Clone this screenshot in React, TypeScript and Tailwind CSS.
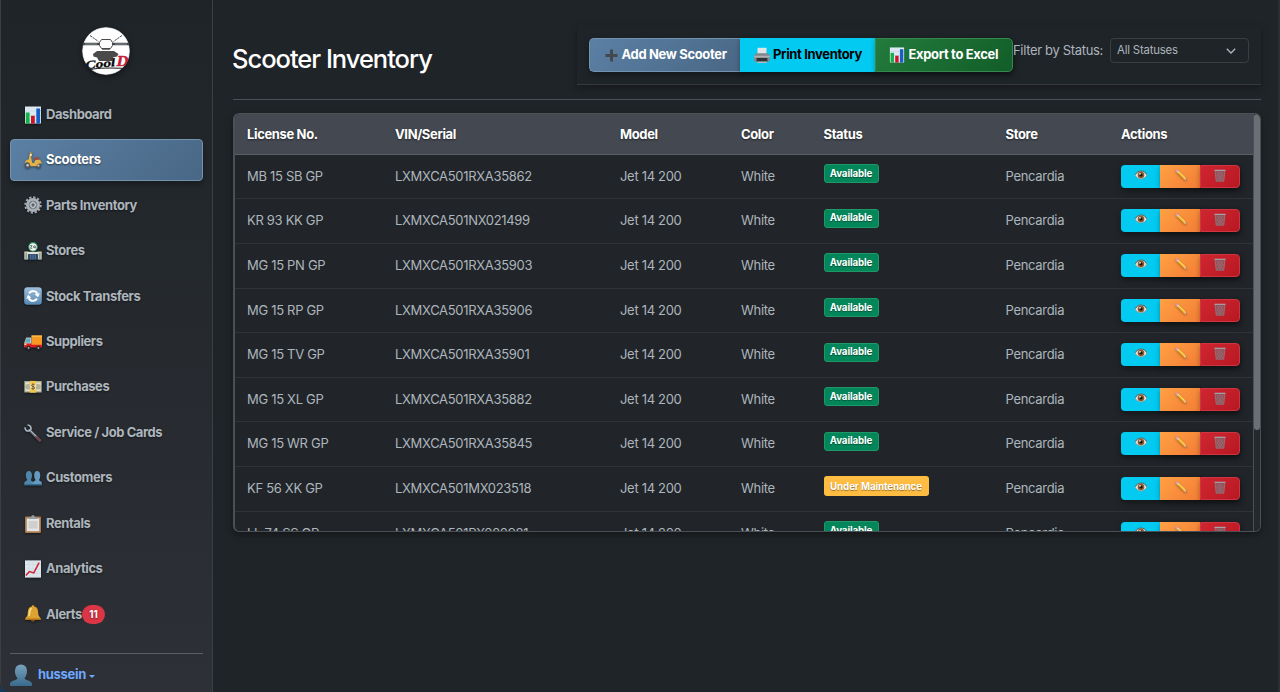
import type { ReactNode } from "react";

type IconProps = { className?: string };

function ChartIcon({ className }: IconProps) {
  return (
    <svg viewBox="0 0 18 18" className={className}>
      <rect x="1" y="0.5" width="16" height="17" fill="#dde9f2" />
      <path d="M1 5h16M1 9.5h16M1 14h16" stroke="#bccbd7" strokeWidth="0.5" />
      <rect x="1.8" y="6.5" width="3.8" height="11" fill="#12b34a" />
      <rect x="7" y="9.8" width="3.8" height="7.7" fill="#cf1224" />
      <rect x="12.3" y="2.5" width="3.8" height="15" fill="#1560c4" />
    </svg>
  );
}

function ScooterIcon({ className }: IconProps) {
  return (
    <svg viewBox="0 0 18 18" className={className}>
      <circle cx="3.6" cy="14.2" r="2.8" fill="#55585c" />
      <circle cx="3.6" cy="14.2" r="1.3" fill="#c4c9ce" />
      <circle cx="14.4" cy="14.6" r="2.5" fill="#55585c" />
      <circle cx="14.4" cy="14.6" r="1.1" fill="#c4c9ce" />
      <path d="M5.900 2 7.800 2.500 7.100 6.500l1.200 5.400h2c.2-2.100 1-3.200 2.600-3.300h2.300c1.600.8 2.400 2.400 2.500 4.300-2.600-1.200-4.600-.2-5.400 2.400H6.600L5.500 12.600C4.200 11 2.600 11 .7 12.400c.2-2.200 1.800-3.600 3.900-3.800z" fill="#e5b045" />
      <path d="M9.700 7.100c1.600-.9 3.600-.9 5.600-.3v1.700H10z" fill="#a8482f" />
      <path d="M5.400 1 8.600 2.400" stroke="#a58a5a" strokeWidth="1" />
      <circle cx="6.900" cy="4" r="1" fill="#fff1b5" />
    </svg>
  );
}

function GearIcon({ className }: IconProps) {
  return (
    <svg viewBox="0 0 18 18" className={className}>
      <circle cx="9" cy="9" r="7.700" fill="none" stroke="#a4abb2" strokeWidth="2" strokeDasharray="2.220 1.810" />
      <circle cx="9" cy="9" r="5.500" fill="#646c74" stroke="#a9b0b7" strokeWidth="3" />
      <path d="M9 4v10M4 9h10" stroke="#a0a7ae" strokeWidth="1.200" />
      <circle cx="9" cy="9" r="2.300" fill="#596169" stroke="#c2c8ce" strokeWidth="1.300" />
    </svg>
  );
}

function StoreIcon({ className }: IconProps) {
  return (
    <svg viewBox="0 0 18 18" className={className}>
      <path d="M.3 9.500h4v8h-4zM13.700 9.500h4v8h-4z" fill="#c9cdbd" />
      <path d="M1.500 11h1.400v6.500H1.500zM15.100 11h1.400v6.500h-1.400z" fill="#8d9b94" />
      <path d="M3.500 9.800h11v2.400h-11z" fill="#dfe2d5" />
      <path d="M4.600 12.200h8.800v5.500H4.600z" fill="#27466b" />
      <path d="M6.800 12.200v5.500M9 12.200v5.500M11.200 12.200v5.500" stroke="#7ea3c4" strokeWidth=".6" />
      <circle cx="9" cy="4.900" r="4.300" fill="#f2f8f3" stroke="#238c55" strokeWidth="1.100" />
      <path d="M6.200 3.600h1.900L6.400 6.300h1.900M10.500 3.300 9.300 5.300h2.400M11.200 3.800v2.700" stroke="#4a555b" strokeWidth=".8" fill="none" />
    </svg>
  );
}

function RefreshIcon({ className }: IconProps) {
  return (
    <svg viewBox="0 0 18 18" className={className}>
      <defs>
        <linearGradient id="sync" x2="0" y2="1">
          <stop stopColor="#9fc0dc" />
          <stop offset="1" stopColor="#5487b2" />
        </linearGradient>
      </defs>
      <rect x=".2" y=".2" width="17.600" height="17.600" rx="3.200" fill="url(#sync)" />
      <path d="M5 6.400C7 3.300 11.500 3.300 13.400 6.800M13 11.600C11 14.700 6.500 14.700 4.600 11.200" stroke="#fff" strokeWidth="2" fill="none" />
      <path d="m15.900 6.200-2 4-3.200-3zM2.100 11.800l2-4 3.200 3z" fill="#fff" />
    </svg>
  );
}

function TruckIcon({ className }: IconProps) {
  return (
    <svg viewBox="0 0 18 18" className={className}>
      <path d="M7.500 2.500H18V13H7.500z" fill="#f79a23" />
      <path d="M7.500 2.500H18v1.300H7.500z" fill="#ffc155" />
      <path d="M2.200 4.500h5.300V14H.3V9.600z" fill="#b9c2c3" />
      <path d="M2.600 5.500H6v4H1.200z" fill="#60aebd" />
      <path d="M.3 10.500h7.200v1.200H18v2.800H.3z" fill="#d81f20" />
      <path d="M.4 10.600h2v1.300h-2z" fill="#f4dfa0" />
      <circle cx="4.600" cy="14.900" r="2.100" fill="#2a2c2f" />
      <circle cx="4.600" cy="14.900" r=".9" fill="#b5b7ba" />
      <circle cx="14.400" cy="14.900" r="2.100" fill="#2a2c2f" />
      <circle cx="14.400" cy="14.900" r=".9" fill="#b5b7ba" />
    </svg>
  );
}

function MoneyIcon({ className }: IconProps) {
  return (
    <svg viewBox="0 0 18 18" className={className}>
      <rect x=".3" y="3" width="17.400" height="11.500" fill="#a9aa94" />
      <rect x="1.200" y="4.200" width="15.600" height="9" fill="#e0dec8" />
      <circle cx="4" cy="8.700" r="2.800" fill="#b1b39c" />
      <circle cx="14" cy="8.700" r="2.800" fill="#b1b39c" />
      <rect x="5.800" y="2.900" width="6.400" height="11.800" fill="#f1c64c" />
      <circle cx="9" cy="8.700" r="3.100" fill="#f5e3a4" />
      <path d="M10.700 6.900c-1-1-3.300-.8-3.300.6 0 1.600 3.300.7 3.300 2.300 0 1.400-2.600 1.400-3.500.4M9 5.400v6.500" stroke="#684e20" strokeWidth=".9" fill="none" />
    </svg>
  );
}

function WrenchIcon({ className }: IconProps) {
  return (
    <svg viewBox="0 0 18 18" className={className}>
      <path d="M5.500 6 15.800 16.300" stroke="#77818b" strokeWidth="2.400" strokeLinecap="round" />
      <path d="M12.500 12.900 16 16.400" stroke="#69434a" strokeWidth="2.500" strokeLinecap="round" />
      <path d="M1.100 3.400c-.2 2.600 1.500 4.200 4.300 3.400l1.500-1.500C7.400 2.900 6 1 3.500 1" stroke="#aab7c3" strokeWidth="1.700" fill="none" />
      <path d="m6.500 6.500 6 6" stroke="#bac4cd" strokeWidth=".8" />
    </svg>
  );
}

function CustomersIcon({ className }: IconProps) {
  return (
    <svg viewBox="0 0 18 18" className={className}>
      <path d="M.3 16v-2.300c.5-1.600 2.500-1.700 3.100-2.700C1.400 9 .8 2 4.800 2s3.800 6.700 2 8.900c.7 1.300 2.200 1.100 2.700 2.800V16z" fill="#4f86a9" />
      <path d="M8.800 16v-2.300c.4-1.600 2.200-1.600 2.800-2.800-1.900-2-2.300-8.900 1.500-8.900 4 0 3.800 6.800 1.900 9 .6 1.100 2.300 1.100 2.800 2.700V16z" fill="#629ac0" />
      <path d="M.3 15h17.500v1.500H.3z" fill="#39698a" />
    </svg>
  );
}

function ClipboardIcon({ className }: IconProps) {
  return (
    <svg viewBox="0 0 18 18" className={className}>
      <rect x="1" y="1.500" width="16" height="16.400" rx=".8" fill="#a7794e" />
      <path d="M2.700 3.300h12.600v13H2.700z" fill="#e4e4e2" />
      <path d="M4.500 6h9v7.500h-9z" fill="#cecfcf" />
      <path d="M4.500 4V2.300h2.700C7.200.8 7.900.2 9 .2s1.800.6 1.800 2.100h2.700V4z" fill="#949da5" />
    </svg>
  );
}

function TrendIcon({ className }: IconProps) {
  return (
    <svg viewBox="0 0 18 18" className={className}>
      <rect x="1" y=".4" width="16" height="17.200" fill="#dce5ec" />
      <path d="M1 4.500h16M1 9h16M1 13.500h16M5 .4v17.200M9 .4v17.200M13 .4v17.200" stroke="#c9d5dd" strokeWidth=".5" />
      <path d="m1.800 15.600 3.600-4 4.400 1.300 5.300-10.300" stroke="#cf2036" strokeWidth="1.500" fill="none" />
    </svg>
  );
}

function BellIcon({ className }: IconProps) {
  return (
    <svg viewBox="0 0 18 18" className={className}>
      <circle cx="9" cy="1.700" r="1.400" fill="#dca52a" />
      <path d="M9 1.500c4.700 0 5.200 3.500 5.400 8.200.4 1.900 2.200 2.300 2.500 4.500H1.100C1.400 12 3.200 11.600 3.600 9.700 3.800 5 4.300 1.500 9 1.500z" fill="#dda332" />
      <path d="M7.500 3.200C5.500 4.700 5.700 8.300 5 11" stroke="#ffe489" strokeWidth="1.500" fill="none" />
      <path d="M1.100 13.400h15.800v1.500H1.100z" fill="#b9791b" />
      <path d="M7 14.900h4c0 2.300-4 2.300-4 0z" fill="#765018" />
    </svg>
  );
}

function UserIcon({ className }: IconProps) {
  return (
    <svg viewBox="0 0 22 22" className={className}>
      <defs>
        <linearGradient id="user" x2="0" y2="1">
          <stop stopColor="#7aa3bd" />
          <stop offset="1" stopColor="#39698c" />
        </linearGradient>
      </defs>
      <path d="M0 22v-2.500c.9-3.200 6.600-2.700 7.500-5.200C3.800 10.500 3.600.5 11 .5s7.200 10 3.500 13.800c.9 2.500 6.600 2 7.500 5.200V22z" fill="url(#user)" />
    </svg>
  );
}

function PlusIcon({ className }: IconProps) {
  return (
    <svg viewBox="0 0 13 13" className={className}>
      <path d="M6.500.5v12M.5 6.500h12" stroke="#42484e" strokeWidth="3" />
    </svg>
  );
}

function PrinterIcon({ className }: IconProps) {
  return (
    <svg viewBox="0 0 16 17" className={className}>
      <path d="M3.500.8h9v6h-9z" fill="#e2e4e6" />
      <path d="M2 6.200h12l1.800 2.600v5.600H.2V8.800z" fill="#85898d" />
      <path d="M.2 8.800h15.600v1.600H.2z" fill="#b0b3b6" />
      <path d="M2.600 11h10.800v3.600H2.600z" fill="#303335" />
      <path d="M3.100 14.600h9.800V16H3.100z" fill="#b9bcbe" />
    </svg>
  );
}

function EyeIcon({ className }: IconProps) {
  return (
    <svg viewBox="0 0 12 12" className={className}>
      <path d="M.2 6.300C2.400 1 9.400.8 11.800 6 9.600 10.900 2.700 11.100.2 6.300z" fill="#ece5dc" stroke="#9a8f84" strokeWidth=".6" />
      <path d="M.3 5.700C2.600.9 9.400.8 11.700 5.600" fill="none" stroke="#5b5047" strokeWidth=".8" />
      <circle cx="6" cy="6" r="3.300" fill="#8a5a33" />
      <circle cx="6" cy="6" r="1.600" fill="#17110d" />
      <circle cx="5" cy="4.900" r=".8" fill="#fff" />
    </svg>
  );
}

function PencilIcon({ className }: IconProps) {
  return (
    <svg viewBox="0 0 12 12" className={className}>
      <path d="M.4 1.500C.6.700 1.200.2 2 .4l1.500 1.400L1.900 3.400z" fill="#e995a8" />
      <path d="m1.600 3.100 1.600-1.600 1.200 1.200-1.600 1.600z" fill="#c9d4dc" />
      <path d="m2.700 4.100 1.600-1.600 6 5.800L8.600 10z" fill="#ffd94f" />
      <path d="m2.700 4.100.7-.7 5.900 5.900-.7.700z" fill="#d99a28" />
      <path d="m8.600 10 1.700-1.700 1.200 3.200z" fill="#e9c795" />
      <path d="m10.600 11 .5-.6.500 1.200z" fill="#333" />
    </svg>
  );
}

function TrashIcon({ className }: IconProps) {
  return (
    <svg viewBox="0 0 12 13" className={className}>
      <path d="M1.100 1.500h9.800l-1.100 10.700H2.200z" fill="#777077" fillOpacity=".65" stroke="#8c858c" strokeWidth=".7" />
      <path d="m3 3 5.900 8M6 3l3 4M2.500 6l4.500 5.500M9 3l-5.900 8M6 3 3 7M9.500 6 5 11.500" stroke="#a87980" strokeWidth=".45" />
      <path d="M.5 1.300h11" stroke="#a7a0a4" strokeWidth="1.200" />
    </svg>
  );
}

function Logo() {
  return (
    <svg viewBox="0 0 48 48" className="mr-[2px] size-12 overflow-hidden rounded-full shadow-[0_2px_5px_rgba(0,0,0,.45)]">
      <circle cx="24" cy="24" r="24" fill="#bfc3c6" />
      <circle cx="24" cy="24" r="23.200" fill="#fff" />
      <path d="m8 8.500 8.500 6M40 8.500l-8.500 6" stroke="#333" strokeWidth=".9" strokeDasharray="2.500 .7" />
      <path d="M1 17h17M30 17h17" stroke="#43474a" strokeWidth="2.500" />
      <path d="M3 17h12M33 17h12" stroke="#aeb3b6" strokeWidth=".7" />
      <path d="M19.500 12.500h9l2 3v3l-2 3h-9l-2-3v-3z" fill="#fff" stroke="#484c4f" strokeWidth="1" />
      <path d="M20 22.300h8" stroke="#555" strokeWidth="1" />
      <path d="M15 24h17l4.500 3-1.500 2.500-4 1-1 3.500H17l-2-3.500-3.500-1L11 27z" fill="#4a4a4b" />
      <text x="3.500" y="41" transform="rotate(-6 14 39)" fill="#080808" stroke="#080808" strokeWidth=".3" className="font-['Liberation_Serif',serif] text-[11.500px] font-bold italic" textLength="30" lengthAdjust="spacingAndGlyphs">Cool</text>
      <text x="34.500" y="38.500" fill="#c51b36" stroke="#c51b36" strokeWidth=".4" className="font-['Liberation_Serif',serif] text-[15px] font-bold italic" textLength="12" lengthAdjust="spacingAndGlyphs">D</text>
      <path d="M8 42.600c10-2 20-1.600 33-1.300" stroke="#111" fill="none" />
    </svg>
  );
}

const nav: { label: string; icon: (p: IconProps) => ReactNode; active?: boolean; count?: number }[] = [
  { label: "Dashboard", icon: ChartIcon },
  { label: "Scooters", icon: ScooterIcon, active: true },
  { label: "Parts Inventory", icon: GearIcon },
  { label: "Stores", icon: StoreIcon },
  { label: "Stock Transfers", icon: RefreshIcon },
  { label: "Suppliers", icon: TruckIcon },
  { label: "Purchases", icon: MoneyIcon },
  { label: "Service / Job Cards", icon: WrenchIcon },
  { label: "Customers", icon: CustomersIcon },
  { label: "Rentals", icon: ClipboardIcon },
  { label: "Analytics", icon: TrendIcon },
  { label: "Alerts", icon: BellIcon, count: 11 },
];

const scooters = [
  ["MB 15 SB GP", "LXMXCA501RXA35862", "Available"],
  ["KR 93 KK GP", "LXMXCA501NX021499", "Available"],
  ["MG 15 PN GP", "LXMXCA501RXA35903", "Available"],
  ["MG 15 RP GP", "LXMXCA501RXA35906", "Available"],
  ["MG 15 TV GP", "LXMXCA501RXA35901", "Available"],
  ["MG 15 XL GP", "LXMXCA501RXA35882", "Available"],
  ["MG 15 WR GP", "LXMXCA501RXA35845", "Available"],
  ["KF 56 XK GP", "LXMXCA501MX023518", "Under Maintenance"],
  ["LL 74 SS GP", "LXMXCA501PX020981", "Available"],
];

const columns = "grid grid-cols-[148px_225px_121px_82.5px_182px_115.5px_1fr] pl-3";

function Sidebar() {
  return (
    <aside className="flex w-[213px] shrink-0 flex-col rounded-bl-[9px] border-x border-[#3b3f44] bg-linear-to-b from-[#1f2428] to-[#2d3036] px-[9px]">
      <div className="flex h-[93.900px] shrink-0 justify-center pt-[27px]">
        <Logo />
      </div>
      <nav className="flex flex-col gap-1">
        {nav.map(({ label, icon: Icon, active, count }) => (
          <a
            key={label}
            className={
              active
                ? "flex h-[41.450px] items-center rounded-[4px] border border-[#7292af] bg-linear-135 from-[#5b80a4] to-[#496785] pl-[13px] text-[13px] font-bold tracking-[-0.28px] text-white shadow-[0_3px_6px_rgba(0,0,0,.35)] [text-shadow:0_1px_2px_rgba(0,0,0,.5)]"
                : "flex h-[41.450px] items-center border border-transparent pl-[13px] text-[13px] font-bold tracking-[-0.42px] text-[#adb5bd] [text-shadow:0_1px_2px_rgba(0,0,0,.5)]"
            }
          >
            <Icon className="mr-1 size-[18px] drop-shadow-[0_1px_1px_rgba(0,0,0,.5)]" />
            <span>{label}</span>
            {count && (
              <span className="flex h-[19px] w-[23px] items-center justify-center rounded-full bg-[#dc3545] text-[10px] font-bold tracking-normal text-white">
                {count}
              </span>
            )}
          </a>
        ))}
      </nav>
      <div className="mt-[18px] flex items-center border-t border-[#5a5e64] pt-[10px]">
        <UserIcon className="mr-[6px] size-[22px]" />
        <span className="text-[13px] font-bold tracking-[-0.3px] text-[#6ea8fe]">hussein</span>
        <svg viewBox="0 0 6 3" className="mt-[2px] ml-[3px] h-[3px] w-[6px]">
          <path d="M0 0h6L3 3z" fill="#6ea8fe" />
        </svg>
      </div>
    </aside>
  );
}

function Toolbar() {
  return (
    <div className="flex h-[59px] w-[684px] items-start border-b border-[#35393e] pt-3 pl-3 shadow-[0_3px_7px_rgba(0,0,0,.28)]">
      <div className="flex h-[34px] rounded-[5px] text-[13px] font-bold tracking-[-0.34px] text-white shadow-[0_3px_7px_rgba(0,0,0,.35)] [text-shadow:0_1px_2px_rgba(0,0,0,.5)]">
        <button className="flex w-[151px] items-center gap-[4px] rounded-l-[5px] border border-r-0 border-[#7292af] bg-linear-135 from-[#5b80a4] to-[#496785] pl-[14.500px]">
          <PlusIcon className="size-[13px]" />
          <span className="whitespace-nowrap">Add New Scooter</span>
        </button>
        <button className="flex w-[135px] items-center gap-[3px] bg-[#03caf0] pl-[14px] text-black shadow-[0_2px_5px_rgba(0,0,0,.3)]">
          <PrinterIcon className="h-[17px] w-[16px]" />
          <span className="whitespace-nowrap">Print Inventory</span>
        </button>
        <button className="flex w-[138px] items-center gap-[4px] rounded-r-[5px] border border-[#36894d] bg-linear-135 from-[#237b3c] to-[#125d29] pl-[12.500px] shadow-[0_2px_5px_rgba(0,0,0,.3)]">
          <ChartIcon className="size-4" />
          <span className="whitespace-nowrap">Export to Excel</span>
        </button>
      </div>
      <span className="mt-[2px] w-[97px] text-[13px] leading-[20px] tracking-[-0.33px] whitespace-nowrap text-[#adb5bd]">Filter by Status:</span>
      <div className="flex h-[25px] w-[139px] items-center justify-between rounded-[4px] border border-[#3a3f44] pr-3 pl-[6px] text-[11.400px] tracking-[-0.2px] text-[#adb5bd]">
        <span>All Statuses</span>
        <svg viewBox="0 0 10 6" className="h-[6px] w-[10px]">
          <path d="m.8.800 4.200 4.200L9.200.8" stroke="#adb5bd" strokeWidth="1.300" fill="none" />
        </svg>
      </div>
    </div>
  );
}

function Actions() {
  return (
    <div className="mt-[10px] flex h-[23px] w-[119px] rounded-[4px] shadow-[0_3px_6px_rgba(0,0,0,.4)]">
      <button className="flex w-[39px] justify-center rounded-l-[4px] bg-[#03caf0] pt-[4px]">
        <EyeIcon className="size-3" />
      </button>
      <button className="flex w-10 justify-center bg-linear-135 from-[#ffa144] to-[#f27c35] pt-[4px] pl-[2px] shadow-[0_2px_5px_rgba(0,0,0,.3)]">
        <PencilIcon className="size-3 drop-shadow-[0_1px_1px_rgba(0,0,0,.35)]" />
      </button>
      <button className="flex w-10 justify-center rounded-r-[4px] border border-[#cf3540] bg-linear-135 from-[#cf2630] to-[#b81823] pt-[3px] shadow-[0_2px_5px_rgba(0,0,0,.3)]">
        <TrashIcon className="h-[13px] w-3" />
      </button>
    </div>
  );
}

function Inventory() {
  return (
    <section className="mt-[13px] flex h-[419px] overflow-hidden rounded-[6px] border border-l-2 border-[#4b5056] bg-[#212529] shadow-[0_3px_7px_rgba(0,0,0,.35)]">
      <div className="w-[1018px]">
        <div className={`${columns} h-[40.700px] items-center border-b border-[#5a5e64] bg-[#444850] pt-[2px] text-[13px] font-bold tracking-[-0.36px] text-white [text-shadow:0_1px_2px_rgba(0,0,0,.5)]`}>
          <span>License No.</span>
          <span>VIN/Serial</span>
          <span>Model</span>
          <span>Color</span>
          <span>Status</span>
          <span>Store</span>
          <span>Actions</span>
        </div>
        {scooters.map(([license, vin, status]) => (
          <div key={license} className={`${columns} h-[44.630px] border-b border-[#2f3337] text-[13px] leading-[43.600px] tracking-[-0.31px] text-[#adb5bd]`}>
            <span>{license}</span>
            <span>{vin}</span>
            <span>Jet 14 200</span>
            <span>White</span>
            <span className="flex items-start pt-[9.400px]">
              <span
                className={
                  status === "Available"
                    ? "flex h-[19px] w-[55px] items-center justify-center rounded-[3px] border border-[#1f9868] bg-[#03875a] text-[9.750px] leading-none font-bold tracking-[-0.1px] text-white [text-shadow:0_1px_1px_rgba(0,0,0,.4)]"
                    : "flex h-5 w-[105px] items-center justify-center rounded-[3px] bg-[#ffbc42] text-[9.750px] leading-none font-bold tracking-[-0.1px] text-white [text-shadow:0_1px_1px_rgba(0,0,0,.4)]"
                }
              >
                {status}
              </span>
            </span>
            <span>Pencardia</span>
            <Actions />
          </div>
        ))}
      </div>
      <div className="flex-1 border-l border-[#4b5056] bg-[#25292d]">
        <div className="h-[316px] rounded-full bg-[#6b6f75]" />
      </div>
    </section>
  );
}

export default function App() {
  return (
    <div className="h-[692px] w-[1280px] overflow-hidden bg-[#123a5c] font-['Inter',sans-serif]">
      <div className="flex h-full overflow-hidden rounded-bl-[9px] border-r-2 border-[#2b2f33] bg-[#1f2428]">
        <Sidebar />
        <main className="flex w-[1048px] flex-col pt-[26px] pl-5">
          <header className="flex h-[74px] justify-between border-b border-[#495057]">
            <h1 className="mt-[14px] -ml-px text-[25.500px] leading-[38px] font-medium tracking-[-1.020px] text-white">Scooter Inventory</h1>
            <Toolbar />
          </header>
          <Inventory />
        </main>
      </div>
    </div>
  );
}
